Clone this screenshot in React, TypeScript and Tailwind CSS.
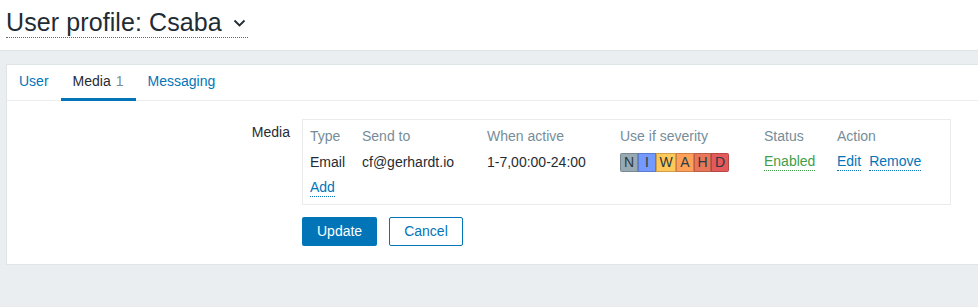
import React from "react";

const severities = [
  { l: "N", bg: "bg-[#97aab3]", w: "w-[18px]" },
  { l: "I", bg: "bg-[#7499ff]", w: "w-[18px]" },
  { l: "W", bg: "bg-[#ffc859]", w: "w-[20px]" },
  { l: "A", bg: "bg-[#ffa059]", w: "w-[18px]" },
  { l: "H", bg: "bg-[#e97659]", w: "w-[17px]" },
  { l: "D", bg: "bg-[#e45959]", w: "w-[18px]" },
];

export default function App() {
  return (
    <div
      className="min-h-[307px] bg-[#ebeef0] text-[14px] text-[#1f2c33]"
      style={{ fontFamily: '"Liberation Sans", Arial, sans-serif' }}
    >
      <header className="h-[51px] bg-white border-b border-[#dfe4e7] px-[6px] pt-[8px]">
        <div className="inline-flex items-center border-b border-dotted border-[#5a6a73] leading-[29px] text-[25px] tracking-[0.1px] pr-[2px]">
          <span>User profile: Csaba</span>
          <svg className="ml-[11px] mt-[2px]" width="13" height="9" viewBox="0 0 13 9" fill="none">
            <path d="M1.5 1.5 L6.5 6.5 L11.5 1.5" stroke="#1f2c33" strokeWidth="1.8" />
          </svg>
        </div>
      </header>

      <main className="ml-[6px] mt-[13px] bg-white border border-r-0 border-[#dfe4e7]">
        <ul className="flex h-[36px] border-b border-[#ebeef0]">
          <li className="h-[36px] -mb-px px-3 flex items-center border-b-[3px] border-transparent text-[#0275b8]">
            User
          </li>
          <li className="h-[36px] -mb-px px-3 flex items-center border-b-[3px] border-[#0275b8]">
            Media<span className="ml-[5px] text-[14px] text-[#768d99]">1</span>
          </li>
          <li className="h-[36px] -mb-px px-3 flex items-center border-b-[3px] border-transparent text-[#0275b8]">
            Messaging
          </li>
        </ul>

        <div className="pt-[18px] pb-[18px]">
          <div className="flex gap-x-3">
            <label className="w-[283px] text-right pt-[4px] leading-[18px]">Media</label>
            <div className="w-[649px] border border-[#ebebeb] px-[7px] py-[3px]">
              <div className="grid grid-cols-[52px_125px_133px_144px_73px_1fr] items-center">
                <div className="h-[26px] flex items-center text-[#768d99]">Type</div>
                <div className="h-[26px] flex items-center text-[#768d99]">Send to</div>
                <div className="h-[26px] flex items-center text-[#768d99]">When active</div>
                <div className="h-[26px] flex items-center text-[#768d99]">Use if severity</div>
                <div className="h-[26px] flex items-center text-[#768d99]">Status</div>
                <div className="h-[26px] flex items-center text-[#768d99]">Action</div>

                <div className="h-[26px] flex items-center">Email</div>
                <div className="h-[26px] flex items-center">cf@gerhardt.io</div>
                <div className="h-[26px] flex items-center">1-7,00:00-24:00</div>
                <div className="h-[26px] flex items-center">
                  <div className="flex rounded-[2px] overflow-hidden">
                    {severities.map((s) => (
                      <span
                        key={s.l}
                        className={`${s.bg} ${s.w} h-[19px] flex items-center justify-center border border-black/20 text-[14px] text-[#2b3a42]`}
                      >
                        {s.l}
                      </span>
                    ))}
                  </div>
                </div>
                <div className="h-[26px] flex items-center">
                  <span className="text-[#429e47] leading-[17px] border-b border-dotted border-[#429e47]">Enabled</span>
                </div>
                <div className="h-[26px] flex items-center gap-2">
                  <span className="text-[#0275b8] leading-[17px] border-b border-dotted border-[#0275b8]">Edit</span>
                  <span className="text-[#0275b8] leading-[17px] border-b border-dotted border-[#0275b8]">Remove</span>
                </div>

                <div className="h-[26px] flex items-center col-span-6">
                  <span className="text-[#0275b8] leading-[17px] border-b border-dotted border-[#0275b8]">Add</span>
                </div>
              </div>
            </div>
          </div>

          <div className="flex gap-3 mt-[12px] ml-[295px]">
            <button className="h-[29px] px-[15px] rounded-[2px] bg-[#0275b8] text-white">Update</button>
            <button className="h-[29px] px-[14px] rounded-[2px] border border-[#0275b8] bg-white text-[#0275b8]">
              Cancel
            </button>
          </div>
        </div>
      </main>
    </div>
  );
}
